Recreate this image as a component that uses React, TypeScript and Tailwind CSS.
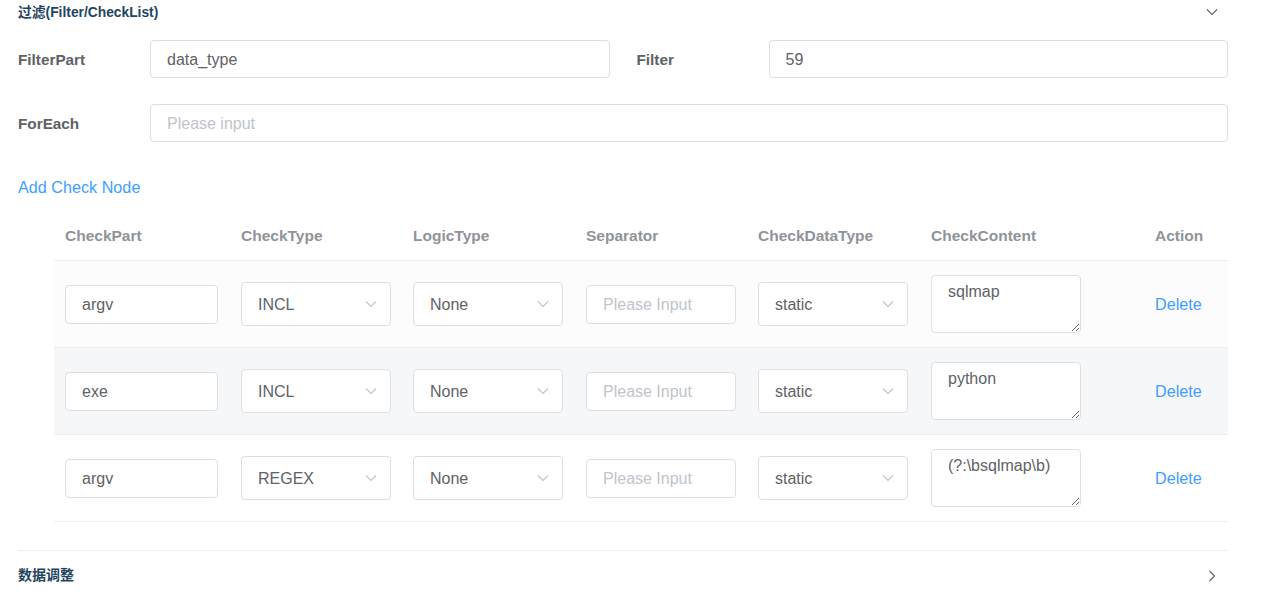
import React from "react";

const font = { fontFamily: '"Liberation Sans", Helvetica, Arial, "Noto Sans CJK SC", sans-serif' };

function Chevron({ dir = "down", className = "" }: { dir?: "down" | "right"; className?: string }) {
  return dir === "down" ? (
    <svg width="12" height="8" viewBox="0 0 12 8" className={className}>
      <polyline points="1,1.5 6,6.5 11,1.5" fill="none" stroke="currentColor" strokeWidth="1.1" />
    </svg>
  ) : (
    <svg width="8" height="12" viewBox="0 0 8 12" className={className}>
      <polyline points="1.5,1 6.5,6 1.5,11" fill="none" stroke="currentColor" strokeWidth="1.1" />
    </svg>
  );
}

function TextInput({ value, placeholder, w, h = "h-[39px]" }: { value?: string; placeholder?: string; w: string; h?: string }) {
  return (
    <input
      readOnly
      defaultValue={value}
      placeholder={placeholder}
      style={font}
      className={`${w} ${h} bg-white border border-[#dcdfe6] rounded-[4px] px-[16px] pt-[2px] text-[16px] text-[#606266] placeholder:text-[#c0c4cc] outline-none`}
    />
  );
}

function Select({ value }: { value: string }) {
  return (
    <div className="w-[150px] h-[44px] bg-white border border-[#dcdfe6] rounded-[4px] pl-[16px] pr-[13px] flex items-center justify-between">
      <span className="text-[16px] text-[#606266] pt-[1px]">{value}</span>
      <Chevron className="text-[#c0c4cc]" />
    </div>
  );
}

const rows = [
  { part: "argv", type: "INCL", content: "sqlmap", bg: "bg-[#fcfcfd]" },
  { part: "exe", type: "INCL", content: "python", bg: "bg-[#f6f7f9]" },
  { part: "argv", type: "REGEX", content: "(?:\\bsqlmap\\b)", bg: "bg-white" },
];

const cols = ["w-[176px]", "w-[172px]", "w-[173px]", "w-[172px]", "w-[173px]", "w-[224px]", "w-[84px]"];
const headers = ["CheckPart", "CheckType", "LogicType", "Separator", "CheckDataType", "CheckContent", "Action"];

export default function App() {
  return (
    <div style={font} className="w-[1280px] h-[594px] bg-white pl-[18px] pr-[52px] overflow-hidden">
      {/* Title */}
      <div className="h-[26px] flex items-center justify-between">
        <span className="text-[13.8px] font-semibold text-[#1f4560]">过滤(Filter/CheckList)</span>
        <Chevron className="text-[#606266] mr-[10px] -mt-[2px]" />
      </div>

      {/* Form */}
      <div className="mt-[14px] grid grid-cols-2 gap-x-[27px]">
        <div className="flex items-center">
          <label className="w-[132px] text-[15.3px] font-bold text-[#606266] pt-[2px]">FilterPart</label>
          <TextInput value="data_type" w="flex-1" h="h-[38px]" />
        </div>
        <div className="flex items-center">
          <label className="w-[132px] text-[15.3px] font-bold text-[#606266] pt-[2px]">Filter</label>
          <TextInput value="59" w="flex-1" h="h-[38px]" />
        </div>
      </div>
      <div className="mt-[26px] flex items-center">
        <label className="w-[132px] text-[15.3px] font-bold text-[#606266] pt-[2px]">ForEach</label>
        <TextInput placeholder="Please input" w="flex-1" h="h-[38px]" />
      </div>

      <div className="mt-[35px] h-[20px] flex items-center">
        <span className="text-[16.2px] text-[#409eff]">Add Check Node</span>
      </div>

      {/* Table */}
      <div className="ml-[36px] mt-[13px]">
        <div className="flex h-[51px] items-center border-b border-[#ebeef5]">
          {headers.map((h, i) => (
            <div key={h} className={`${cols[i]} pl-[11px] pt-[1px] text-[15.5px] font-bold text-[#909399]`}>
              {h}
            </div>
          ))}
        </div>
        {rows.map((r, idx) => (
          <div key={idx} className={`flex h-[87px] items-center border-b border-[#ebeef5] ${r.bg}`}>
            <div className={`${cols[0]} pl-[11px]`}>
              <TextInput value={r.part} w="w-[153px]" />
            </div>
            <div className={`${cols[1]} pl-[11px]`}>
              <Select value={r.type} />
            </div>
            <div className={`${cols[2]} pl-[11px]`}>
              <Select value="None" />
            </div>
            <div className={`${cols[3]} pl-[11px]`}>
              <TextInput placeholder="Please Input" w="w-[150px]" />
            </div>
            <div className={`${cols[4]} pl-[11px]`}>
              <Select value="static" />
            </div>
            <div className={`${cols[5]} pl-[11px]`}>
              <textarea
                readOnly
                defaultValue={r.content}
                style={font}
                className="block w-[150px] h-[58px] bg-white border border-[#dcdfe6] rounded-[4px] px-[16px] pt-[5px] text-[16px] leading-[22px] text-[#606266] outline-none resize"
              />
            </div>
            <div className={`${cols[6]} pl-[11px] text-[16.2px] text-[#409eff]`}>Delete</div>
          </div>
        ))}
      </div>

      {/* Bottom section */}
      <div className="mt-[28px] border-t border-[#ebeef5] h-[50px] flex items-center justify-between">
        <span className="text-[14px] font-semibold text-[#1f4560]">数据调整</span>
        <Chevron dir="right" className="text-[#606266] mr-[12px]" />
      </div>
    </div>
  );
}
